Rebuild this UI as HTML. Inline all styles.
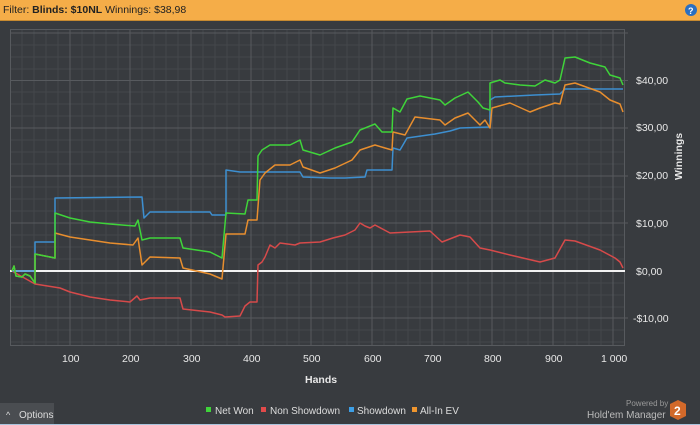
<!DOCTYPE html>
<html><head><meta charset="utf-8"><style>
body{margin:0;width:700px;height:425px;overflow:hidden;background:#383b3f;font-family:"Liberation Sans",sans-serif}
.hdr{position:absolute;left:0;top:0;width:700px;height:20px;background:#f5ad48;border-bottom:1px solid #c78a30;font-size:10.5px;line-height:20px;color:#222}
.hdr span{padding-left:3px}
svg{position:absolute;left:0;top:0}
</style></head><body>
<div class="hdr"><span>Filter: <b>Blinds: $10NL</b> Winnings: $38,98</span></div>
<svg width="700" height="425" font-family="Liberation Sans, sans-serif">
<g stroke="#44474b" stroke-width="1">
<path d="M22 29V345M34 29V345M46 29V345M58 29V345M82 29V345M94 29V345M106 29V345M118 29V345M142 29V345M154 29V345M166 29V345M178 29V345M203 29V345M215 29V345M227 29V345M239 29V345M263 29V345M275 29V345M287 29V345M299 29V345M323 29V345M335 29V345M347 29V345M359 29V345M384 29V345M396 29V345M408 29V345M420 29V345M444 29V345M456 29V345M468 29V345M480 29V345M504 29V345M516 29V345M528 29V345M540 29V345M565 29V345M577 29V345M589 29V345M601 29V345"/>
<path d="M10 45H625M10 57H625M10 69H625M10 92H625M10 104H625M10 116H625M10 140H625M10 152H625M10 164H625M10 187H625M10 199H625M10 211H625M10 235H625M10 247H625M10 259H625M10 283H625M10 295H625M10 307H625M10 330H625M10 342H625"/>
</g>
<g stroke="#575a5e" stroke-width="1">
<path d="M70 29V345M130 29V345M191 29V345M251 29V345M311 29V345M372 29V345M432 29V345M492 29V345M553 29V345M613 29V345"/>
<path d="M10 33H628M10 80.5H628M10 128H628M10 176H628M10 223H628M10 318H628"/>
<rect x="10.5" y="29.5" width="614" height="316" fill="none"/>
</g>
<line x1="10" y1="271" x2="625" y2="271" stroke="#f2f2f2" stroke-width="2"/>
<g fill="none" stroke-width="1.5" stroke-linejoin="round">
<polyline stroke="#d64a4a" points="12,271 35,284 60,288 70,292 90,297 110,300 130,302 137,296 140,300 150,298 180,298 183,309 210,312 222,315 225,317 240,316 245,306 250,302 257,302 258,265 262,262 265,257 270,245 275,248 280,243 295,245 300,243 320,242 333,238 345,235 355,230 360,223 365,226 370,228 375,225 390,233 410,232 430,231 442,242 460,235 470,237 480,248 490,250 510,255 540,262 555,258 565,240 575,241 600,250 615,258 620,262 623,268"/>
<polyline stroke="#3d8fd0" points="12,271 35,271 35,242 55,242 55,198 142,197 144,218 150,212 210,212 212,215 226,215 226,170 240,172 300,172 303,177 330,178 345,178 365,177 367,170 392,170 393,148 400,150 407,138 435,134 450,131 460,128 490,127 490,100 495,97 535,95 560,94 565,89 623,89"/>
<polyline stroke="#e88e2e" points="12,271 14,266 16,276 22,277 25,274 30,276 35,283 35,254 55,258 55,233 70,237 90,240 110,243 133,245 138,238 142,265 150,257 180,258 183,268 210,274 222,279 226,234 245,234 248,220 257,220 260,180 265,173 275,165 290,165 300,160 303,167 320,173 335,168 352,160 360,150 375,145 385,148 392,150 393,132 405,135 415,117 440,120 445,125 455,118 468,113 480,125 485,120 490,128 492,108 510,103 530,112 540,108 555,103 560,104 565,85 575,83 600,92 610,100 620,104 623,112"/>
<polyline stroke="#3fd43a" points="12,271 14,266 16,276 22,277 25,274 30,276 35,283 35,254 55,258 55,213 70,218 90,222 110,224 135,226 138,220 142,240 150,238 180,238 183,248 210,252 222,258 226,213 245,214 248,200 257,200 258,156 262,150 270,145 290,145 300,140 303,150 320,155 335,148 352,142 360,130 375,124 382,132 392,132 393,108 400,112 407,99 420,96 440,100 445,105 455,98 468,92 478,102 483,108 490,110 490,83 500,80 505,83 520,85 535,86 545,80 555,83 560,80 565,58 575,57 590,63 605,67 610,75 620,78 623,85"/>
</g>
<g fill="#e8e8e8" font-size="10.5">
<text x="62" y="362">100</text><text x="122" y="362">200</text><text x="183" y="362">300</text><text x="243" y="362">400</text><text x="303" y="362">500</text><text x="364" y="362">600</text><text x="424" y="362">700</text><text x="484" y="362">800</text><text x="545" y="362">900</text><text x="601" y="362">1 000</text>
<text x="636" y="84">$40,00</text><text x="636" y="131">$30,00</text><text x="636" y="179">$20,00</text><text x="636" y="227">$10,00</text><text x="636" y="275">$0,00</text><text x="633" y="322">-$10,00</text>
<text x="305" y="383" font-weight="bold" font-size="10.5">Hands</text>
<text transform="translate(682,180) rotate(-90)" font-weight="bold" font-size="10.5">Winnings</text>
</g>
<rect x="0" y="403" width="54" height="22" fill="#4a4d51"/>
<text x="6" y="418" fill="#ddd" font-size="9">^</text>
<text x="19" y="418" fill="#ddd" font-size="10">Options</text>
<g font-size="10" fill="#ddd">
<rect x="206" y="407" width="5" height="5" fill="#3fd43a"/><text x="215" y="414">Net Won</text>
<rect x="261" y="407" width="5" height="5" fill="#e24a4a"/><text x="270" y="414">Non Showdown</text>
<rect x="349" y="407" width="5" height="5" fill="#3d9fe6"/><text x="357" y="414">Showdown</text>
<rect x="412" y="407" width="5" height="5" fill="#f0962e"/><text x="420" y="414">All-In EV</text>
</g>
<text x="626" y="406" fill="#999" font-size="8">Powered by</text>
<text x="587" y="418" fill="#bbb" font-size="10">Hold'em Manager</text>
<polygon points="678,400 686,404 686,416 678,420 670,416 670,404" fill="#d2692a"/>
<text x="674" y="415" fill="#fff" font-size="12" font-weight="bold">2</text>
<circle cx="691" cy="10" r="6" fill="#2a6fc0"/><text x="688" y="14" fill="#fff" font-size="9" font-weight="bold">?</text>
<rect x="0" y="424" width="700" height="1" fill="#a9c4dd"/>
</svg>
</body></html>
